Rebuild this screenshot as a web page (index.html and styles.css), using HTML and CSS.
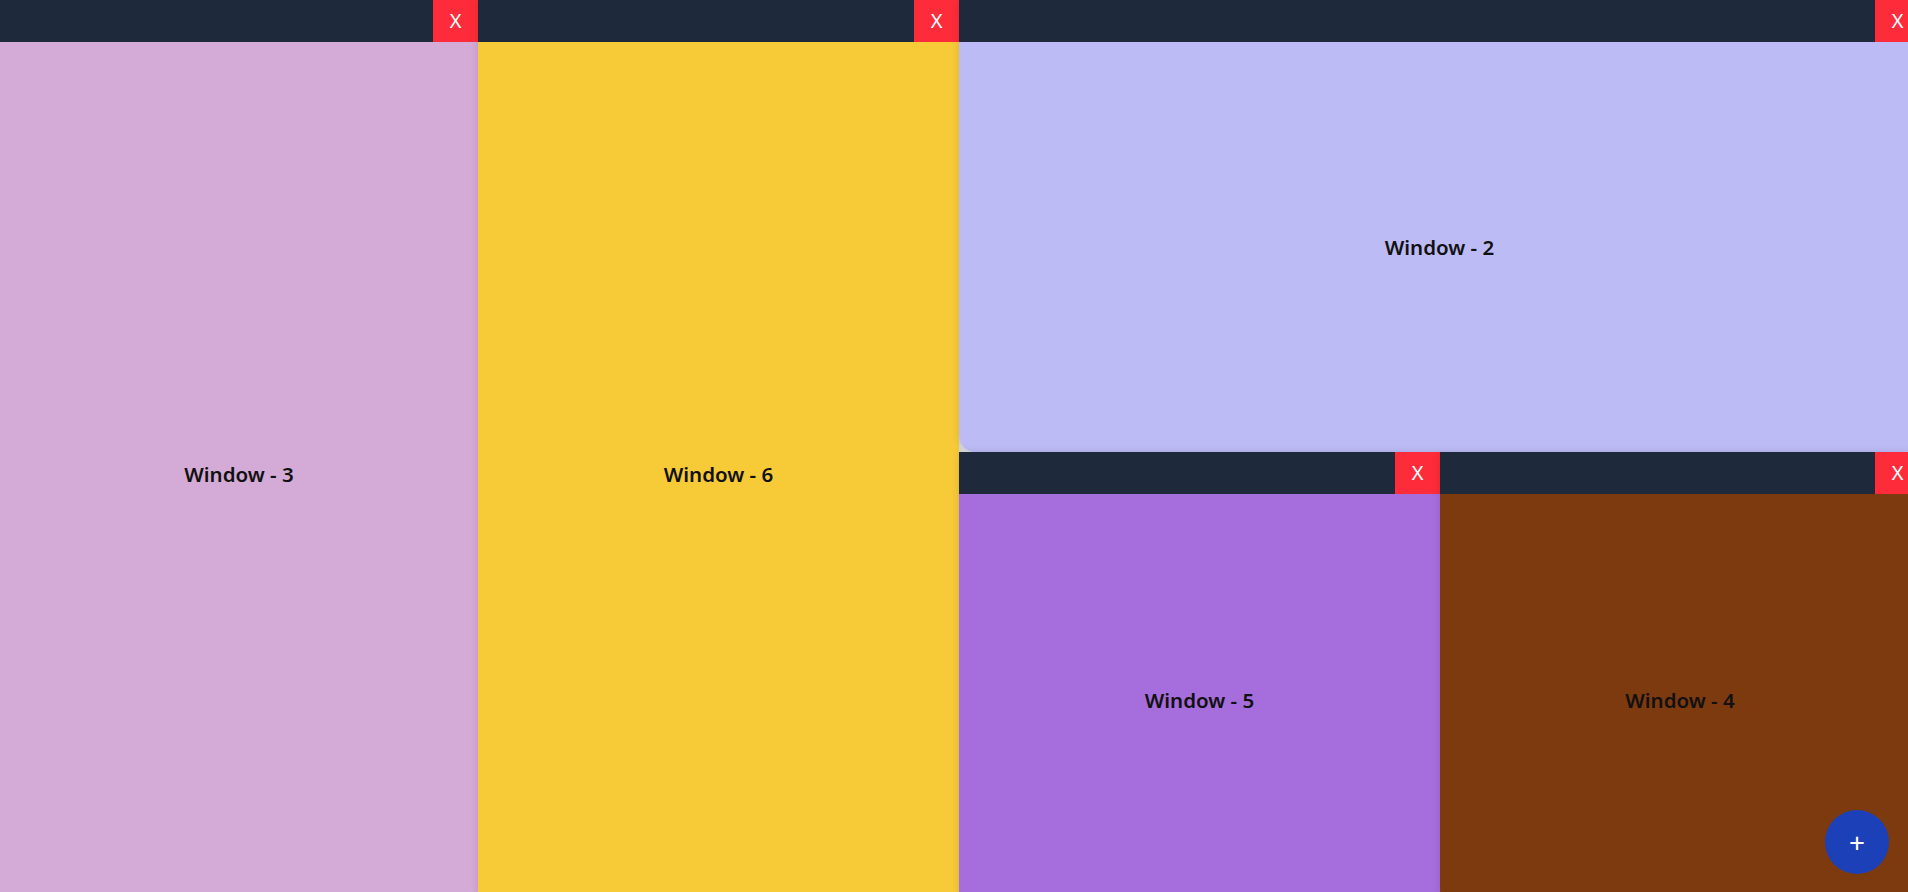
FILE: index.html
```html
<!DOCTYPE html>
<html>
<head>
<meta charset="utf-8">
<link rel="stylesheet" href="styles.css">
</head>
<body>
<div class="desktop">
  <div class="win w3">
    <div class="bar"><button class="close">X</button></div>
    <div class="body pink">Window - 3</div>
  </div>
  <div class="win w6">
    <div class="bar"><button class="close">X</button></div>
    <div class="body yellow">Window - 6</div>
  </div>
  <div class="win w2">
    <div class="bar"><button class="close">X</button></div>
    <div class="body lavender">Window - 2</div>
  </div>
  <div class="win w5">
    <div class="bar"><button class="close">X</button></div>
    <div class="body purple">Window - 5</div>
  </div>
  <div class="win w4">
    <div class="bar"><button class="close">X</button></div>
    <div class="body brown">Window - 4</div>
  </div>
  <button class="fab">+</button>
</div>
</body>
</html>
```
FILE: styles.css
```css
html, body {
  margin: 0;
  padding: 0;
  height: 100%;
  overflow: hidden;
}
body {
  background: #e5e5e5;
  font-family: "Noto Sans", "Open Sans", sans-serif;
}
.desktop {
  position: relative;
  width: 100vw;
  height: 100vh;
  overflow: hidden;
}
.win {
  position: absolute;
  display: flex;
  flex-direction: column;
  border-radius: 0 0 16px 16px;
  overflow: hidden;
  box-shadow: 0 0 8px rgba(0, 0, 0, 0.12);
}
.w3 { left: 0; top: 0; width: 478px; height: 906px; }
.w6 { left: 478px; top: 0; width: 481px; height: 906px; }
.w2 { left: 959px; top: 0; width: 961px; height: 452px; }
.w5 { left: 959px; top: 452px; width: 481px; height: 454px; }
.w4 { left: 1440px; top: 452px; width: 480px; height: 454px; }
.bar {
  height: 42px;
  flex: none;
  background: #1e293b;
  display: flex;
  justify-content: flex-end;
}
.close {
  width: 45px;
  height: 42px;
  border: 0;
  margin: 0;
  padding: 0;
  background: #fe2b3a;
  color: #ffffff;
  font-family: "Noto Sans", "Open Sans", sans-serif;
  font-size: 20px;
  line-height: 42px;
  cursor: pointer;
}
.body {
  flex: 1;
  display: flex;
  align-items: center;
  justify-content: center;
  font-size: 20.5px;
  font-weight: 600;
  color: #111111;
}
.pink { background: #d4aad6; }
.yellow { background: #f7ca38; }
.lavender { background: #bdbbf6; }
.purple { background: #a66ddc; }
.brown { background: #7e3a0f; }
.fab {
  position: absolute;
  right: 19px;
  bottom: 18px;
  width: 64px;
  height: 64px;
  border-radius: 50%;
  border: 0;
  padding: 0;
  background: #1c40b8;
  color: #ffffff;
  font-family: "Noto Sans", sans-serif;
  font-size: 28px;
  font-weight: 400;
  line-height: 64px;
  cursor: pointer;
}
```
